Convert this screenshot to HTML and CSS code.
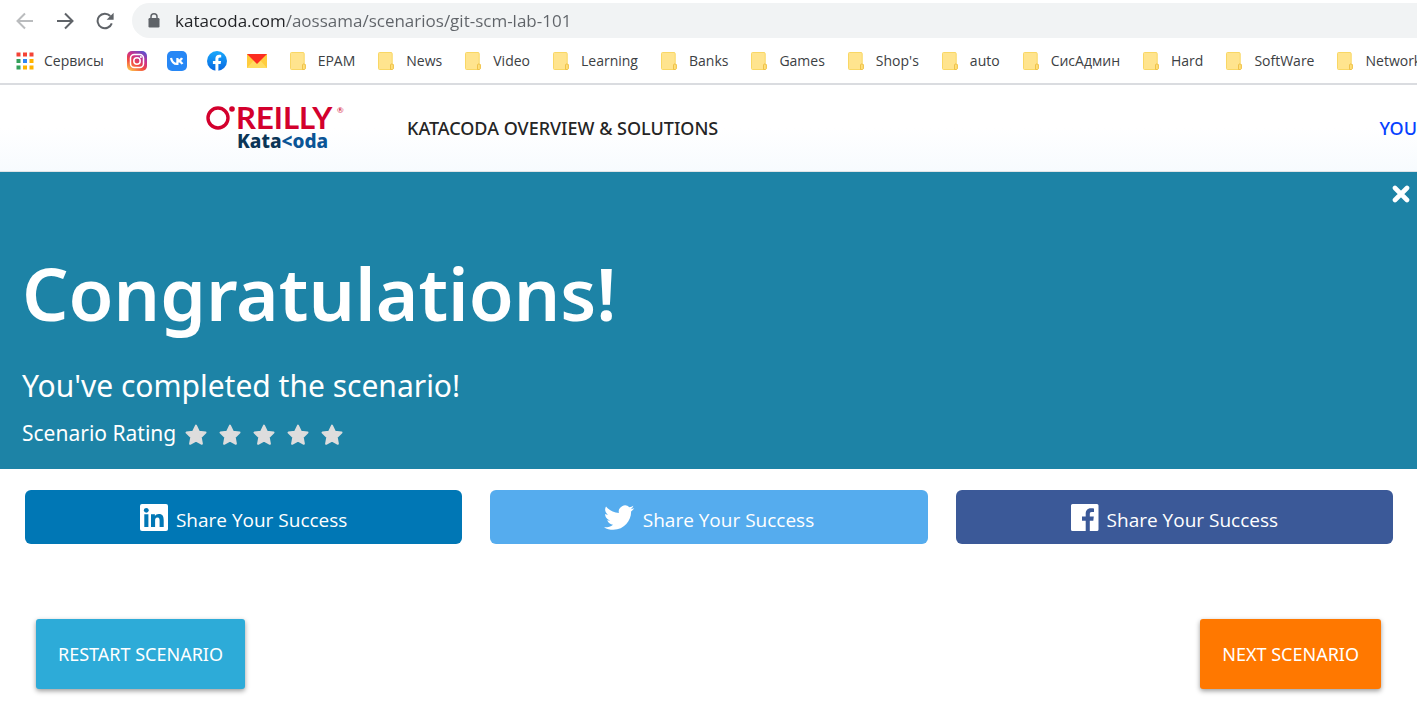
FILE: index.html
```html
<!DOCTYPE html>
<html lang="en">
<head>
<meta charset="utf-8">
<meta name="viewport" content="width=device-width, initial-scale=1">
<title>Katacoda scenario</title>
<link rel="stylesheet" href="styles.css">
</head>
<body>
<svg class="defs" width="0" height="0" aria-hidden="true">
  <symbol id="folder" viewBox="0 0 16 18">
    <path d="M1.500.5h11.500a1.200 1.200 0 0 1 1.200 1.200v9.800l1 1v4a1 1 0 0 1-1 1H1.500a1 1 0 0 1-1-1v-15a1 1 0 0 1 1-1z" fill="#ffe48e" stroke="#f9d765"/>
    <path d="M12.500 17.500v-4.500a1.500 1.500 0 0 1 2-1l.8 1v3.500l-1 1z" fill="#ffe07a" stroke="#efc14a"/>
  </symbol>
  <symbol id="star" viewBox="0 0 24 24">
    <path d="M12 2.600l2.900 6.100 6.600.9-4.800 4.600 1.200 6.600-5.900-3.200-5.900 3.200 1.200-6.600-4.800-4.600 6.600-.9z" fill="#ddd" stroke="#ddd" stroke-width="2" stroke-linejoin="round"/>
  </symbol>
</svg>

<header class="browser">
  <div class="toolbar">
    <div class="nav-buttons">
      <button class="icon-button" aria-label="Back" disabled><svg width="18" height="18" viewBox="0 0 18 18" fill="none" stroke="#babcbe" stroke-width="2"><path d="M17 9H2M9 1.500L1.500 9 9 16.500"/></svg></button>
      <button class="icon-button" aria-label="Forward"><svg width="18" height="18" viewBox="0 0 18 18" fill="none" stroke="#5f6368" stroke-width="2"><path d="M1 9h15M9 1.500L16.500 9 9 16.500"/></svg></button>
      <button class="icon-button" aria-label="Reload"><svg width="18" height="18" viewBox="0 0 18 18"><path d="M15.800 11.400A7.300 7.300 0 1 1 14.300 4" fill="none" stroke="#5f6368" stroke-width="2"/><path d="M17.600.8v7h-7z" fill="#5f6368"/></svg></button>
    </div>
    <div class="omnibox">
      <svg width="12" height="15" viewBox="0 0 12 15"><rect x=".5" y="5" width="11" height="9.500" rx="1.200" fill="#5f6368"/><path d="M3 6V3.800a3 3 0 0 1 6 0V6" fill="none" stroke="#5f6368" stroke-width="1.500"/></svg>
      <input class="address" type="text" aria-label="Address" value="katacoda.com/aossama/scenarios/git-scm-lab-101">
    </div>
  </div>
  <nav class="bookmarks" aria-label="Bookmarks">
    <a class="bookmark apps" href="#"><svg width="18" height="18" viewBox="0 0 18 18"><path d="M.5.5h4v4h-4zM7 .5h4v4H7zM13.500.5h4v4h-4z" fill="#f44336"/><path d="M.5 7h4v4h-4zM.5 13.500h4v4h-4z" fill="#33a05a"/><path d="M7 7h4v4H7z" fill="#2f86f6"/><path d="M13.500 7h4v4h-4zM7 13.500h4v4H7zM13.500 13.500h4v4h-4z" fill="#ffb300"/></svg><span>Сервисы</span></a>
    <div class="sites">
      <a href="#" aria-label="Instagram"><svg width="20" height="20" viewBox="0 0 20 20"><defs><linearGradient id="ig" x1=".2" y1="1" x2=".8" y2="0"><stop offset="0" stop-color="#fdc04c"/><stop offset=".35" stop-color="#f2483f"/><stop offset=".65" stop-color="#c9308c"/><stop offset="1" stop-color="#5951d0"/></linearGradient></defs><rect width="20" height="20" rx="5" fill="url(#ig)"/><g fill="none" stroke="#fff" stroke-width="1.500"><rect x="3.500" y="3.500" width="13" height="13" rx="3.800"/><circle cx="10" cy="10" r="3.200"/></g><circle cx="13.900" cy="6.100" r="1" fill="#fff"/></svg></a>
      <a href="#" aria-label="VK"><svg width="20" height="20" viewBox="0 0 20 20"><rect width="20" height="20" rx="5" fill="#2787f5"/><path d="M4 7c.8 3.500 2.400 6 5.800 6h.6V7M10.400 10c2.300-.2 3.800-1.300 4.600-3M10.400 10c2.500.2 4.200 1.300 5 3" fill="none" stroke="#fff" stroke-width="2.200"/></svg></a>
      <a href="#" aria-label="Facebook"><svg width="20" height="20" viewBox="0 0 20 20"><defs><linearGradient id="fb" x2="0" y2="1"><stop stop-color="#19a9fc"/><stop offset="1" stop-color="#0866e0"/></linearGradient></defs><circle cx="10" cy="10" r="10" fill="url(#fb)"/><path d="M8.400 19.900v-7H5.900V10h2.500V7.800c0-2.600 1.500-4 3.800-4 1.100 0 2 .2 2 .2v2.500h-1.200c-1.300 0-1.600.8-1.600 1.500v2h2.700l-.5 2.900h-2.200v7z" fill="#fff"/></svg></a>
      <a href="#" aria-label="Mail"><svg width="20" height="20" viewBox="0 0 20 20"><path d="M0 3h20v14H0z" fill="#ffcc3e"/><path d="M0 17L7 9l3 3 3-3 7 8z" fill="#ffdc60"/><path d="M0 3h20L10 13z" fill="#fc2d20"/></svg></a>
    </div>
    <a class="bookmark" href="#"><svg width="16" height="18"><use href="#folder"/></svg><span>EPAM</span></a>
    <a class="bookmark" href="#"><svg width="16" height="18"><use href="#folder"/></svg><span>News</span></a>
    <a class="bookmark" href="#"><svg width="16" height="18"><use href="#folder"/></svg><span>Video</span></a>
    <a class="bookmark" href="#"><svg width="16" height="18"><use href="#folder"/></svg><span>Learning</span></a>
    <a class="bookmark" href="#"><svg width="16" height="18"><use href="#folder"/></svg><span>Banks</span></a>
    <a class="bookmark" href="#"><svg width="16" height="18"><use href="#folder"/></svg><span>Games</span></a>
    <a class="bookmark" href="#"><svg width="16" height="18"><use href="#folder"/></svg><span>Shop's</span></a>
    <a class="bookmark" href="#"><svg width="16" height="18"><use href="#folder"/></svg><span>auto</span></a>
    <a class="bookmark" href="#"><svg width="16" height="18"><use href="#folder"/></svg><span>СисАдмин</span></a>
    <a class="bookmark" href="#"><svg width="16" height="18"><use href="#folder"/></svg><span>Hard</span></a>
    <a class="bookmark" href="#"><svg width="16" height="18"><use href="#folder"/></svg><span>SoftWare</span></a>
    <a class="bookmark" href="#"><svg width="16" height="18"><use href="#folder"/></svg><span>Network</span></a>
  </nav>
</header>

<div class="site-header">
  <a class="logo" href="#" aria-label="O'Reilly Katacoda">
    <svg width="140" height="50" viewBox="0 0 140 50">
      <circle cx="12" cy="15" r="10" fill="none" stroke="#d3002d" stroke-width="3.400"/>
      <circle cx="26" cy="6" r="2.800" fill="#d3002d"/>
      <text class="logo-brand" x="30" y="26">REILLY</text>
      <text class="logo-mark" x="131" y="10">®</text>
      <text class="logo-product" x="31" y="45">Kata<tspan class="logo-accent">&lt;oda</tspan></text>
    </svg>
  </a>
  <a class="header-link" href="#">KATACODA OVERVIEW &amp; SOLUTIONS</a>
  <a class="header-link account" href="#">YOU</a>
</div>

<main>
  <section class="hero">
    <button class="close" aria-label="Close"><svg width="18" height="18" viewBox="0 0 18 18"><path d="M3 3l12 12M15 3L3 15" stroke="#fff" stroke-width="4.600" stroke-linecap="round"/></svg></button>
    <h1>Congratulations!</h1>
    <p class="subtitle">You've completed the scenario!</p>
    <div class="rating" role="radiogroup" aria-labelledby="rating-label">
      <span id="rating-label">Scenario Rating</span>
      <div class="stars">
        <label><input type="radio" name="rating" value="1" aria-label="1 star"><svg width="24" height="24"><use href="#star"/></svg></label>
        <label><input type="radio" name="rating" value="2" aria-label="2 stars"><svg width="24" height="24"><use href="#star"/></svg></label>
        <label><input type="radio" name="rating" value="3" aria-label="3 stars"><svg width="24" height="24"><use href="#star"/></svg></label>
        <label><input type="radio" name="rating" value="4" aria-label="4 stars"><svg width="24" height="24"><use href="#star"/></svg></label>
        <label><input type="radio" name="rating" value="5" aria-label="5 stars"><svg width="24" height="24"><use href="#star"/></svg></label>
      </div>
    </div>
  </section>

  <div class="shares">
    <a class="share linkedin" href="#"><svg width="28" height="28" viewBox="0 0 28 28"><rect y="1" width="28" height="27" rx="2" fill="#fff"/><g fill="#0077b5" transform="translate(0 1)"><circle cx="6.300" cy="6.300" r="2.400"/><path d="M4.300 10.300h4.100V23H4.300zM11 10.300h3.900V12c.7-1.200 2-2.100 3.900-2.100 4.100 0 4.900 2.700 4.900 6.200V23h-4.100v-6.100c0-1.500 0-3.400-2.100-3.400s-2.400 1.600-2.400 3.300V23H11z"/></g></svg><span>Share Your Success</span></a>
    <a class="share twitter" href="#"><svg width="31" height="28" viewBox="0 0 24 22"><path d="M23.600 4.100c-.9.400-1.800.6-2.800.8 1-.6 1.700-1.500 2.100-2.700-.9.600-2 1-3.100 1.200A4.900 4.900 0 0 0 11.500 7.800C7.500 7.600 3.900 5.700 1.400 2.700c-1.300 2.200-.7 5 1.500 6.500-.8 0-1.500-.2-2.200-.6-.1 2.300 1.600 4.400 3.900 4.900-.7.200-1.500.2-2.200.1.600 2 2.400 3.300 4.500 3.400-2 1.600-4.700 2.300-7.200 2 2.100 1.400 4.700 2.100 7.400 2.100 9 0 14.300-7.700 14-14.500 1-.7 1.800-1.500 2.500-2.500z" fill="#fff"/></svg><span>Share Your Success</span></a>
    <a class="share facebook" href="#"><svg width="28" height="28" viewBox="0 -1 28 28"><path d="M1.500 0h24.500A1.500 1.500 0 0 1 27.500 1.500v24a1.500 1.500 0 0 1-1.500 1.500h-7.200V16.700h3.500l.5-4.100h-4V10c0-1.200.3-2 2-2h2.200V4.400c-.4-.1-1.700-.2-3.100-.2-3.100 0-5.200 1.900-5.200 5.400v3H11v4.100h3.700V27H1.500A1.500 1.500 0 0 1 0 25.500v-24A1.500 1.500 0 0 1 1.500 0z" fill="#fff"/></svg><span>Share Your Success</span></a>
  </div>

  <div class="actions">
    <button class="action restart">RESTART SCENARIO</button>
    <button class="action next">NEXT SCENARIO</button>
  </div>
</main>
</body>
</html>
```
FILE: styles.css
```css
* {
  box-sizing: border-box;
}

body {
  margin: 0;
  overflow-x: hidden;
  background: #fff;
  font-family: "Noto Sans", "Open Sans", sans-serif;
}

a {
  color: inherit;
  text-decoration: none;
}

button {
  padding: 0;
  border: 0;
  background: none;
  font: inherit;
  cursor: pointer;
}

svg {
  display: block;
  flex: none;
}

.defs {
  position: absolute;
}

.browser {
  padding-top: 3px;
  border-bottom: 2px solid #dadce0;
  overflow: hidden;
}

.toolbar {
  display: flex;
  align-items: center;
}

.nav-buttons {
  display: flex;
  gap: 22px;
  padding: 0 18px 0 16px;
}

.omnibox {
  display: flex;
  flex: 1;
  align-items: center;
  gap: 15px;
  height: 35px;
  padding-left: 16px;
  border-radius: 18px 0 0 18px;
  background: #f1f3f4;
}

.address {
  flex: 1;
  padding: 0;
  border: 0;
  outline: 0;
  background: linear-gradient(90deg, #202124 110px, #5f6368 110px) text;
  color: transparent;
  font: 17px/24px "Open Sans", sans-serif;
}

.bookmarks {
  display: flex;
  align-items: center;
  height: 45px;
  padding-left: 16px;
  gap: 23px;
  color: #3c4043;
  font: 14px/20px "Open Sans", sans-serif;
  white-space: nowrap;
}

.bookmark {
  display: flex;
  flex: none;
  align-items: center;
  gap: 12px;
}

.apps {
  gap: 10px;
}

.sites {
  display: flex;
  flex: none;
  gap: 20px;
}

.site-header {
  display: flex;
  align-items: center;
  height: 87px;
  padding-left: 206px;
  border-bottom: 1px solid #dfe3e6;
  background: linear-gradient(#fff 50%, #f7fbfe);
  overflow: hidden;
}

.logo {
  margin-right: 61px;
}

.logo svg {
  overflow: visible;
}

.logo-brand {
  fill: #d3002d;
  font: 700 31px Lato, sans-serif;
}

.logo-mark {
  fill: #d3002d;
  font: 8px Lato, sans-serif;
}

.logo-product {
  fill: #0b3556;
  font: 800 19px "Noto Sans", sans-serif;
}

.logo-accent {
  fill: #0b5596;
}

.header-link {
  flex: none;
  color: #252525;
  font-size: 18px;
  font-weight: 500;
  line-height: 24px;
}

.account {
  margin-left: auto;
  color: #0741ff;
}

.hero {
  position: relative;
  padding: 77px 22px 20px;
  background: #1d83a6;
  color: #fff;
}

.close {
  position: absolute;
  top: 13px;
  right: 7px;
}

h1 {
  margin: 0;
  font-size: 73px;
  font-weight: 600;
  line-height: 88px;
}

.subtitle {
  margin: 27px 0 0;
  font-size: 30px;
  line-height: 44px;
}

.rating {
  display: flex;
  align-items: center;
  gap: 8px;
  margin-top: 9px;
  font-size: 21px;
  line-height: 32px;
}

.stars {
  display: flex;
  gap: 10px;
  padding-top: 3px;
}

.stars label {
  position: relative;
  cursor: pointer;
}

.stars input {
  position: absolute;
  inset: 0;
  margin: 0;
  opacity: 0;
}

.shares {
  display: grid;
  grid-template-columns: repeat(3, 1fr);
  gap: 28px;
  padding: 21px 24px 0 25px;
}

.share {
  display: flex;
  align-items: center;
  justify-content: center;
  gap: 8px;
  height: 54px;
  border-radius: 6px;
  color: #fff;
  font: 500 19px/28px "Open Sans", sans-serif;
}

.share span {
  padding-top: 6px;
}

.linkedin {
  background: #0077b5;
}

.twitter {
  background: #55acee;
}

.facebook {
  background: #3b5998;
}

.actions {
  display: flex;
  justify-content: space-between;
  padding: 75px 36px 30px;
}

.action {
  height: 70px;
  padding: 0 22px;
  border-radius: 3px;
  box-shadow: 0 2px 5px rgba(0, 0, 0, .4);
  color: #fff;
  font-size: 18px;
}

.restart {
  background: #2dabd8;
}

.next {
  background: #ff7800;
}
```
